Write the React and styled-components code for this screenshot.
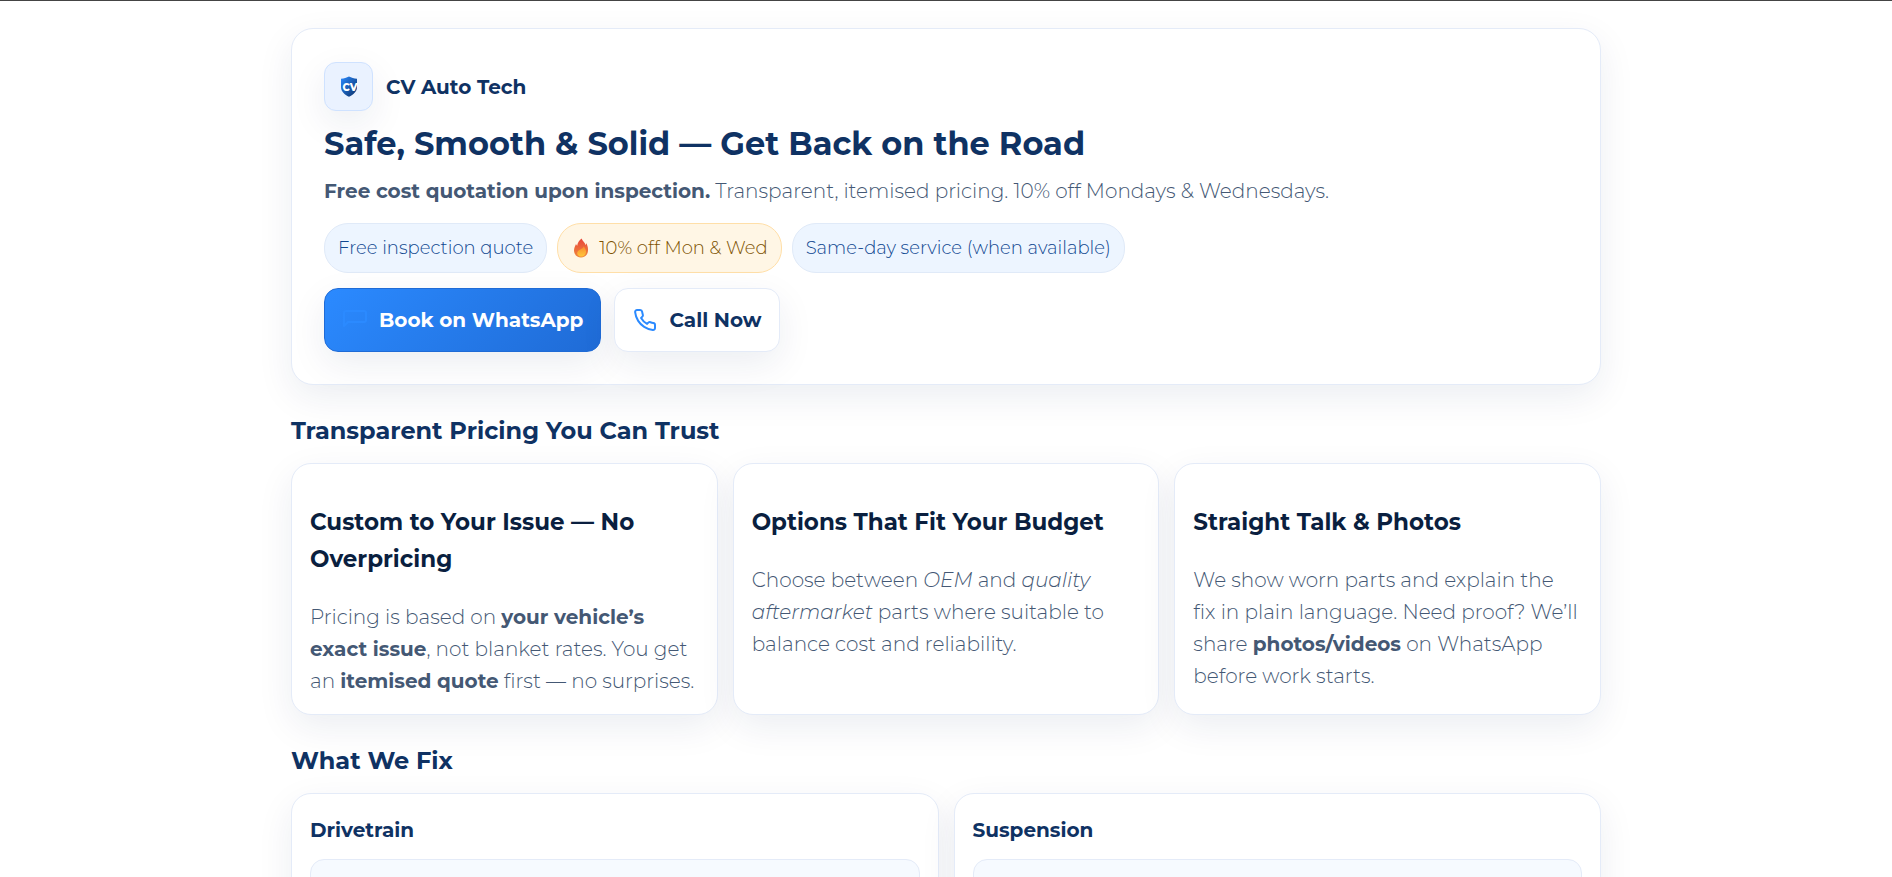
import React from 'react'
import styled, { createGlobalStyle } from 'styled-components'
import { FiPhone } from 'react-icons/fi'

const pricing = [
  {
    title: 'Custom to Your Issue — No Overpricing',
    text: (
      <>
        Pricing is based on <strong>your vehicle’s exact issue</strong>, not blanket rates. You get
        an <strong>itemised quote</strong> first — no surprises.
      </>
    ),
  },
  {
    title: 'Options That Fit Your Budget',
    text: (
      <>
        Choose between <em>OEM</em> and <em>quality aftermarket</em> parts where suitable to balance
        cost and reliability.
      </>
    ),
  },
  {
    title: 'Straight Talk & Photos',
    text: (
      <>
        We show worn parts and explain the fix&nbsp;in plain language. Need proof? We’ll
        share <strong>photos/videos</strong> on WhatsApp before work starts.
      </>
    ),
  },
]

const services = ['Drivetrain', 'Suspension']

function ShieldLogo() {
  return (
    <svg width="18" height="22" viewBox="0 0 18 22" aria-hidden="true">
      <defs>
        <linearGradient id="shield" x1="0" y1="0" x2="1" y2="1">
          <stop offset="0" stopColor="#2b8aff" />
          <stop offset="1" stopColor="#0b2f66" />
        </linearGradient>
      </defs>
      <path
        d="M9 0.6 C11.4 1.8 14 2.6 17 2.8 V11 C17 15.6 13.4 18.8 9 20.8 C4.6 18.8 1 15.6 1 11 V2.8 C4 2.6 6.6 1.8 9 0.6 Z"
        fill="url(#shield)"
      />
      <text x="10" y="15" textAnchor="middle" fontSize="10" fontWeight="800" fill="#fff">
        CV
      </text>
    </svg>
  )
}

function Flame() {
  return (
    <svg width="20" height="20" viewBox="0 0 20 20" aria-hidden="true">
      <defs>
        <linearGradient id="flame" x1="0" y1="0" x2="0" y2="1">
          <stop offset="0" stopColor="#e8453a" />
          <stop offset="1" stopColor="#f08a3c" />
        </linearGradient>
        <linearGradient id="flameCore" x1="0" y1="0" x2="0" y2="1">
          <stop offset="0" stopColor="#f88a2c" />
          <stop offset="1" stopColor="#ffc83d" />
        </linearGradient>
      </defs>
      <path
        d="M10.6 0.5 C11.4 3.2 14 4.6 14.6 7 C15 6.6 15.2 5.8 15.1 5 C16.6 7.4 17.2 9.8 17 12.4 C16.8 16.6 14 19.5 10 19.5 C6 19.5 3 16.6 3 12.6 C3 9.8 4.2 7.8 5 6 C5.4 6.8 5.6 7.4 6.2 7.8 C6.4 4.8 8.2 2.6 10.6 0.5 Z"
        fill="url(#flame)"
      />
      <path
        d="M12.8 8.2 C13.6 10.2 15.2 11.4 15 14 C14.8 16.8 12.8 18.6 10.2 18.6 C7.8 18.6 6.2 17 6.2 15 C6.2 12.8 8 12.2 9.4 11.4 C11 10.6 12.4 9.8 12.8 8.2 Z"
        fill="url(#flameCore)"
      />
    </svg>
  )
}

function ChatIcon() {
  return (
    <svg width="24" height="24" viewBox="0 0 24 24" fill="none" stroke="#2b8aff" strokeWidth="2" aria-hidden="true">
      <path
        d="M1 18 V5 a2 2 0 0 1 2-2 H21 a2 2 0 0 1 2 2 V12 a2 2 0 0 1-2 2 H5 Z"
        strokeLinecap="round"
        strokeLinejoin="round"
      />
    </svg>
  )
}

export default function App() {
  return (
    <Page>
      <GlobalStyle />
      <Container>
        <Hero>
          <Brand>
            <LogoBox>
              <ShieldLogo />
            </LogoBox>
            CV Auto Tech
          </Brand>
          <Title>Safe, Smooth & Solid — Get Back on the Road</Title>
          <Lead>
            <strong>Free cost quotation upon inspection.</strong> Transparent, itemised pricing. 10%
            off Mondays & Wednesdays.
          </Lead>
          <Pills>
            <Pill>Free inspection quote</Pill>
            <Pill $hot>
              <Flame />
              10% off Mon & Wed
            </Pill>
            <Pill>Same-day service (when available)</Pill>
          </Pills>
          <Actions>
            <Button href="#book" $primary>
              <ChatIcon />
              Book on WhatsApp
            </Button>
            <Button href="#call">
              <FiPhone size={24} color="#2b8aff" />
              Call Now
            </Button>
          </Actions>
        </Hero>

        <SectionTitle>Transparent Pricing You Can Trust</SectionTitle>
        <Grid $cols={3}>
          {pricing.map((item) => (
            <Card key={item.title}>
              <CardTitle>{item.title}</CardTitle>
              <CardText>{item.text}</CardText>
            </Card>
          ))}
        </Grid>

        <SectionTitle>What We Fix</SectionTitle>
        <Grid $cols={2}>
          {services.map((name) => (
            <Card key={name}>
              <ServiceName>{name}</ServiceName>
              <ServicePanel />
            </Card>
          ))}
        </Grid>
      </Container>
    </Page>
  )
}

const GlobalStyle = createGlobalStyle`
  * {
    box-sizing: border-box;
  }
  body {
    margin: 0;
    background: #fff;
    color: #0a1f3f;
    font-family: Montserrat, Inter, "Open Sans", sans-serif;
    font-size: 20px;
    font-weight: 300;
    line-height: 32px;
  }
  strong {
    font-weight: 700;
  }
`

const Page = styled.div`
  border-top: 1px solid #444;
  padding: 27px 24px 0;
`

const Container = styled.main`
  max-width: 1310px;
  margin: 0 auto;
`

const Card = styled.article`
  background: #fff;
  border: 1px solid #e4ebf8;
  border-radius: 20px;
  padding: 18px;
  padding-bottom: 17px;
  box-shadow: 0 12px 36px rgba(15, 42, 90, 0.08);
`

const Hero = styled.header`
  background: #fff;
  border: 1px solid #e4ebf8;
  border-radius: 22px;
  padding: 33px 32px 32px;
  box-shadow: 0 12px 36px rgba(15, 42, 90, 0.08);
`

const Brand = styled.div`
  display: flex;
  align-items: center;
  gap: 13px;
  color: #0f3263;
  font-weight: 700;
`

const LogoBox = styled.span`
  display: flex;
  align-items: center;
  justify-content: center;
  width: 49px;
  height: 49px;
  background: #eaf2ff;
  border: 1px solid #cfe2ff;
  border-radius: 12px;
  box-shadow: 0 12px 36px rgba(15, 42, 90, 0.08);
`

const Title = styled.h1`
  margin: 13px 0 11px;
  color: #0f3263;
  font-size: 32px;
  font-weight: 700;
  line-height: 40px;
`

const Lead = styled.p`
  margin: 0;
  color: #445874;
`

const Pills = styled.div`
  display: flex;
  flex-wrap: wrap;
  gap: 10px;
  margin-top: 16px;
`

const Pill = styled.span`
  display: inline-flex;
  align-items: center;
  gap: 8px;
  height: 50px;
  padding: 0 13px;
  border: 1px solid ${(props) => (props.$hot ? '#ffdfa8' : '#e0eaf8')};
  border-radius: 24px;
  background: ${(props) => (props.$hot ? '#fff6e5' : '#edf5ff')};
  color: ${(props) => (props.$hot ? '#7d5200' : '#0f4790')};
  font-size: 18px;
`

const Actions = styled.div`
  display: flex;
  flex-wrap: wrap;
  gap: 13px;
  margin-top: 15px;
`

const Button = styled.a`
  display: inline-flex;
  align-items: center;
  gap: 12px;
  height: 64px;
  padding: 0 17px 0 18px;
  border: 1px solid ${(props) => (props.$primary ? '#1f6bd6' : '#e4ebf8')};
  border-radius: 14px;
  background: ${(props) => (props.$primary ? 'linear-gradient(135deg, #2b8aff, #1f6bd6)' : '#fff')};
  color: ${(props) => (props.$primary ? '#fff' : '#0f3263')};
  font-weight: 700;
  text-decoration: none;
  box-shadow: 0 12px 36px rgba(15, 42, 90, 0.08);
`

const SectionTitle = styled.h2`
  margin: 26px 0 12px;
  color: #0f3263;
  font-size: 24px;
  font-weight: 700;
  line-height: 40px;
`

const Grid = styled.section`
  display: grid;
  grid-template-columns: repeat(${(props) => props.$cols}, 1fr);
  gap: 15px;
`

const CardTitle = styled.h3`
  margin: 22px 0 23px;
  font-size: 23px;
  font-weight: 700;
  line-height: 37px;
`

const CardText = styled.p`
  margin: 0;
  color: #445874;
`

const ServiceName = styled.h3`
  margin: 2px 0 13px;
  color: #0f3263;
  font-size: 20px;
  font-weight: 700;
  line-height: 32px;
`

const ServicePanel = styled.div`
  min-height: 64px;
  border: 1px solid #e4ebf8;
  border-radius: 14px;
  background: #f6faff;
`
